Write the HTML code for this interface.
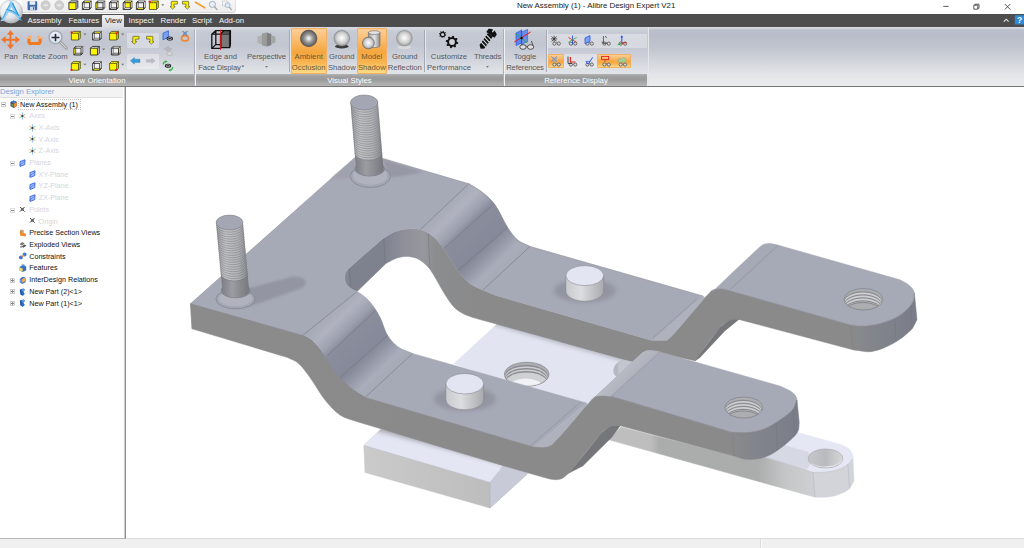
<!DOCTYPE html>
<html lang="en">
<head>
<meta charset="utf-8">
<title>New Assembly (1) - Alibre Design Expert V21</title>
<style>
html,body{margin:0;padding:0;width:1024px;height:548px;overflow:hidden;background:#fff;font-family:"Liberation Sans",sans-serif;}
*{box-sizing:border-box;}
#titlebar{position:absolute;left:0;top:0;width:1024px;height:14px;background:#fff;}
#qat{position:absolute;left:22px;top:0;width:214px;height:13px;background:linear-gradient(#f6f6f6,#ededed);border-bottom:1px solid #d5d5d5;border-right:1px solid #e2e2e2;border-radius:0 0 3px 0;}
#title{position:absolute;left:517px;top:0.4px;height:12px;line-height:12px;font-size:7.9px;color:#222;white-space:nowrap;}
#menubar{position:absolute;left:0;top:14px;width:1024px;height:12.5px;background:#4d4d4d;}
.tab{position:absolute;top:0.4px;height:12.5px;line-height:13px;font-size:7.8px;color:#f4f4f4;white-space:nowrap;}
#tabview{position:absolute;left:102px;top:0.5px;width:22px;height:12.5px;background:linear-gradient(#f0f0f2,#d9dbe1);border-radius:1px 1px 0 0;}
#ribbon{position:absolute;left:0;top:26.5px;width:1024px;height:60px;background:linear-gradient(#d9dce3 0%,#c6cad4 8%,#c2c6d1 30%,#cdd0d9 50%,#dfe2e6 75%,#e9ebec 100%);border-bottom:1px solid #757575;}
.grp{position:absolute;top:0;height:59px;}
.grplabel{position:absolute;left:0;right:0;top:47.5px;height:11.5px;background:linear-gradient(#b2b2b2 0%,#9f9f9f 22%,#9a9a9a 45%,#acacac 80%,#b5b5b5 100%);color:#fff;font-size:7.8px;line-height:13.5px;text-align:center;white-space:nowrap;overflow:hidden;}
.sep{position:absolute;top:2px;width:1px;height:57px;background:#adb0b8;box-shadow:1px 0 0 #f0f2f4;}
.sep2{position:absolute;top:3px;width:1px;height:42px;background:#a5a8b0;box-shadow:1px 0 0 #e6e8ec;}
.lbl{position:absolute;font-size:7.7px;line-height:11px;color:#585858;text-align:center;white-space:nowrap;transform:translateX(-50%);}
.on{position:absolute;background:linear-gradient(#fbcf9a 0%,#f9b866 30%,#f5a63f 52%,#f8b34f 75%,#fbdc8a 100%);border:1px solid #f3b060;border-radius:1px;}
.box{position:absolute;background:rgba(255,255,255,0.33);border-radius:1px;}
#explorer{z-index:2;position:absolute;left:0;top:87px;width:126px;height:451.5px;background:#fff;border-right:1.5px solid #8f8f8f;border-bottom:1px solid #b8b8b8;box-shadow:inset -1px 0 0 #cdcdcd;}
#exphead{position:absolute;left:0;top:0;width:123px;height:11px;background:#f3f3f3;border-bottom:1px solid #e0e0e0;color:#7da7d8;font-size:7.65px;line-height:10px;white-space:nowrap;}
.tr{position:absolute;margin-top:-0.1px;font-size:7.2px;line-height:10px;height:10px;white-space:nowrap;color:#111;}
.dim{color:#d3d6de;}
.pm{position:absolute;width:5px;height:5px;border:1px solid #b5b5b5;background:#fff;}
.pm i{position:absolute;left:0;top:1px;width:3px;height:1px;background:#888;}
#status{position:absolute;left:0;top:538px;width:1024px;height:10px;background:#f0f0f0;border-top:1px solid #dedede;}
#status i{position:absolute;left:759.5px;top:0;width:1px;height:10px;background:#fafafa;border-left:1px solid #dcdcdc;box-sizing:content-box;}
svg.ov{position:absolute;left:0;top:0;pointer-events:none;}
</style>
</head>
<body>
<div id="titlebar">
  <div id="qat"></div>
  <div id="title">New Assembly (1) - Alibre Design Expert V21</div>
</div>
<div id="menubar">
  <div id="tabview"></div>
  <div class="tab" style="left:27.5px">Assembly</div>
  <div class="tab" style="left:68.5px">Features</div>
  <div class="tab" style="left:105px;color:#222">View</div>
  <div class="tab" style="left:128.5px">Inspect</div>
  <div class="tab" style="left:160.5px">Render</div>
  <div class="tab" style="left:192px">Script</div>
  <div class="tab" style="left:219px">Add-on</div>
</div>
<div id="ribbon">
  <div class="grp" style="left:0;width:194px"><div class="grplabel">View Orientation</div></div>
  <div class="sep" style="left:194px"></div>
  <div class="grp" style="left:196px;width:307px"><div class="grplabel">Visual Styles</div></div>
  <div class="sep" style="left:503px"></div>
  <div class="grp" style="left:505px;width:142px"><div class="grplabel">Reference Display</div></div>
  <div style="position:absolute;left:648px;top:0;width:376px;height:59px;background:linear-gradient(#dde0e6 0%,#bcc0cb 5%,#b9bdc9 14%,#c1c5cf 35%,#d2d5db 58%,#e2e4e7 80%,#eaecec 100%);border-left:1px solid #e4e6ea"></div>
  <div class="sep2" style="left:289px"></div>
  <div class="sep2" style="left:424px"></div>
  <div class="sep2" style="left:546px"></div>
  <div class="box" style="left:126.8px;top:6.9px;width:32.2px;height:14.9px"></div>
  <div class="box" style="left:126.8px;top:27.5px;width:32.2px;height:14.5px"></div>
  <div class="box" style="left:548px;top:7px;width:98.5px;height:14px"></div>
  <div class="box" style="left:564px;top:27px;width:33px;height:14.5px"></div>
  <div class="on" style="left:291px;top:1.5px;width:35.5px;height:46px"></div>
  <div class="on" style="left:357px;top:1.5px;width:29.5px;height:46px"></div>
  <div class="on" style="left:548px;top:27px;width:16px;height:14.5px"></div>
  <div class="on" style="left:597px;top:27px;width:33.5px;height:14.5px"></div>
  <div class="lbl" style="left:11px;top:24.7px">Pan</div>
  <div class="lbl" style="left:34.2px;top:24.7px">Rotate</div>
  <div class="lbl" style="left:57.8px;top:24.7px">Zoom</div>
  <div class="lbl" style="left:220.5px;top:24.7px">Edge and<br><span style="letter-spacing:-0.17px;margin-left:-2px">Face Display</span></div>
  <div class="lbl" style="left:266.5px;top:24.7px;letter-spacing:-0.1px">Perspective</div>
  <div class="lbl" style="left:308.7px;top:24.7px;color:#6a5a30">Ambient<br>Occlusion</div>
  <div class="lbl" style="left:341.8px;top:24.7px">Ground<br>Shadow</div>
  <div class="lbl" style="left:371.8px;top:24.7px;color:#6a5a30">Model<br>Shadow</div>
  <div class="lbl" style="left:404.8px;top:24.7px">Ground<br>Reflection</div>
  <div class="lbl" style="left:449px;top:24.7px">Customize<br>Performance</div>
  <div class="lbl" style="left:487.5px;top:24.7px;letter-spacing:-0.15px">Threads</div>
  <div class="lbl" style="left:525px;top:24.7px">Toggle<br><span style="letter-spacing:-0.18px">References</span></div>
</div>
<svg class="ov" width="1024" height="90" viewBox="0 0 1024 90">
<defs>
<radialGradient id="gLogo" cx="40%" cy="30%" r="75%"><stop offset="0" stop-color="#ffffff"/><stop offset="0.6" stop-color="#e4e6ea"/><stop offset="1" stop-color="#a9adb5"/></radialGradient>
<radialGradient id="gSphD" cx="50%" cy="50%" r="55%"><stop offset="0" stop-color="#ffffff"/><stop offset="0.45" stop-color="#9a9a9a"/><stop offset="1" stop-color="#4a4a4a"/></radialGradient>
<radialGradient id="gSphL" cx="50%" cy="48%" r="55%"><stop offset="0" stop-color="#ffffff"/><stop offset="0.6" stop-color="#cfcfcf"/><stop offset="1" stop-color="#8f8f8f"/></radialGradient>
<linearGradient id="gCyl" x1="0" x2="1"><stop offset="0" stop-color="#9a9a9a"/><stop offset="0.5" stop-color="#e6e6e6"/><stop offset="1" stop-color="#8a8a8a"/></linearGradient>
<g id="cw" fill="none" stroke="#2e2e2e" stroke-width="0.9" stroke-linejoin="round">
 <path d="M2.2 0.4H9.3V7.2H2.2Z" stroke="#6a6a6a"/>
 <path d="M0.4 2.2H7.5V9H0.4Z"/>
 <path d="M0.4 2.2L2.2 0.4M7.5 2.2L9.3 0.4M7.5 9L9.3 7.2M0.4 9L2.2 7.2"/>
</g>
<path id="cbg" d="M0.4 2.2L2.2 0.4H9.3V7.2L7.5 9H0.4Z" fill="#f1f1f1"/>
<g id="cF"><use href="#cbg"/><path d="M0.4 2.2H7.5V9H0.4Z" fill="#fdf400"/><path d="M7.5 2.2L9.3 0.4V7.2L7.5 9Z" fill="#d8d8d8"/><path d="M0.4 2.2H7.5V9H0.4ZM0.4 2.2L2.2 0.4H9.3V7.2L7.5 9M7.5 2.2L9.3 0.4" fill="none" stroke="#2e2e2e" stroke-width="0.9" stroke-linejoin="round"/></g>
<g id="cBk"><use href="#cbg"/><path d="M2.2 0.4H9.3V7.2H2.2Z" fill="#fdf400"/><use href="#cw"/></g>
<g id="cL"><use href="#cbg"/><path d="M0.4 2.2L2.2 0.4V7.2L0.4 9Z" fill="#fdf400"/><path d="M0.4 9L2.2 7.2H9.3L7.5 9Z" fill="#bdbdbd"/><use href="#cw"/></g>
<g id="cR"><use href="#cbg"/><path d="M7.5 2.2L9.3 0.4V7.2L7.5 9Z" fill="#fdf400"/><path d="M0.4 9L2.2 7.2H9.3L7.5 9Z" fill="#bdbdbd"/><use href="#cw"/></g>
<g id="cT"><use href="#cbg"/><path d="M0.4 2.2L2.2 0.4H9.3L7.5 2.2Z" fill="#fdf400"/><path d="M7.5 2.2L9.3 0.4V7.2L7.5 9Z" fill="#d0d0d0"/><use href="#cw"/></g>
<g id="cU"><use href="#cbg"/><path d="M0.4 9L2.2 7.2H9.3L7.5 9Z" fill="#fdf400"/><use href="#cw"/></g>
<g id="cI"><path d="M0.4 2.2L2.2 0.4H9.3V7.2L7.5 9H0.4Z" fill="#fdf400"/><path d="M7.5 2.2L9.3 0.4V7.2L7.5 9Z" fill="#e0d800"/><path d="M0.4 2.2H7.5V9H0.4ZM7.5 2.2L9.3 0.4M0.4 2.2L2.2 0.4H9.3V7.2L7.5 9" fill="none" stroke="#4a4a20" stroke-width="0.8" stroke-linejoin="round"/></g>
<path id="dd" d="M0 0H3L1.5 1.8Z" fill="#777"/>
<g id="gl" fill="none" stroke="#6a6a6a" stroke-width="1"><circle cx="1.8" cy="2" r="1.6" fill="#d8d8d8"/><circle cx="6.2" cy="2" r="1.6" fill="#d8d8d8"/><path d="M3.4 1.6Q4 1 4.6 1.6"/></g>
</defs>
<circle cx="11" cy="11.5" r="11.5" fill="url(#gLogo)" stroke="#b5b8bf" stroke-width="0.6"/>
<path d="M11 0.4L13.8 3.4L4 20.6L0.4 21.6Z" fill="#9ed2f5"/><path d="M11 0.4L21.8 20.8L18.4 19.4L9.2 3.2Z" fill="#8ecbf2"/><path d="M12.4 3L20.6 19.8" stroke="#2496d6" stroke-width="1.3" fill="none"/><path d="M9.8 4.4L2.2 19.6" stroke="#3aa2dc" stroke-width="1" fill="none"/><path d="M5.6 10.2Q12.6 10.4 19.6 17.6" stroke="#8ecbf2" stroke-width="2.6" fill="none"/><path d="M6.4 9.4Q13 9.8 19.4 16" stroke="#2a9ad8" stroke-width="1" fill="none"/>
<g><rect x="27.6" y="1.2" width="9.6" height="9" rx="0.8" fill="#3f69a8"/><rect x="29.6" y="1.2" width="5.6" height="3.6" fill="#e9eef7"/><rect x="30" y="6.6" width="5" height="3.6" fill="#c9d6ea"/><rect x="33" y="7.2" width="1.3" height="2.4" fill="#3f69a8"/></g>
<circle cx="45.6" cy="5.2" r="4.5" fill="#cecece" stroke="#bcbcbc" stroke-width="0.6"/><path d="M43.2 5.2L45.6 3.4V4.6H48V5.9H45.6V7Z" fill="#e9e9e9"/>
<circle cx="59.3" cy="5.2" r="4.5" fill="#cecece" stroke="#bcbcbc" stroke-width="0.6"/><path d="M61.7 5.2L59.3 3.4V4.6H56.9V5.9H59.3V7Z" fill="#e9e9e9"/>
<use href="#cF" x="68.5" y="0.5"/>
<use href="#cT" x="82" y="0.5"/>
<use href="#cL" x="95.5" y="0.5"/>
<use href="#cR" x="109" y="0.5"/>
<use href="#cBk" x="122.8" y="0.5"/>
<use href="#cU" x="136" y="0.5"/>
<use href="#cI" x="149" y="0.5"/>
<rect x="148.6" y="0.6" width="2" height="2" fill="#f01818"/>
<use href="#dd" x="161.3" y="4.2"/>
<path transform="translate(170 0.8) scale(1)" d="M1.8 0.5H7.4V3.3H4V5.8H5.2L2.6 8.3L0 5.8H1.2V1.1Q1.2 0.5 1.8 0.5Z" fill="#f7ee00" stroke="#5a5a30" stroke-width="0.7" stroke-linejoin="round"/>
<path transform="translate(182.5 0.8) scale(1)" d="M5.6 0.5H0V3.3H3.4V5.8H2.2L4.8 8.3L7.4 5.8H6.2V1.1Q6.2 0.5 5.6 0.5Z" fill="#f7ee00" stroke="#5a5a30" stroke-width="0.7" stroke-linejoin="round"/>
<path d="M195.5 2.2L204.8 7.8" stroke="#f0a030" stroke-width="1.6" stroke-linecap="round"/>
<circle cx="212.4" cy="4.4" r="3.1" fill="#e6edf6" stroke="#a9b4c2" stroke-width="1"/><path d="M214.6 6.8L217 9.6" stroke="#a9a9a9" stroke-width="1.4" stroke-linecap="round"/>
<rect x="222.5" y="1" width="5.5" height="5" fill="none" stroke="#9a9a9a" stroke-width="0.6" stroke-dasharray="1 0.7"/><circle cx="227.6" cy="5.2" r="2.5" fill="#dbe8f6" stroke="#9fb2c8" stroke-width="0.8"/><path d="M229.4 7.2L231.4 9.6" stroke="#a9a9a9" stroke-width="1.2" stroke-linecap="round"/>
<path d="M943.3 6.4H948.6" stroke="#333" stroke-width="0.8"/>
<path d="M973.8 5.2H977.8V9.2H973.8ZM975 5.2V4.2H979V8.2H977.8" fill="none" stroke="#333" stroke-width="0.8"/>
<path d="M1004.8 4L1010.3 9.5M1010.3 4L1004.8 9.5" stroke="#333" stroke-width="0.8"/>
<path d="M1003.8 21.6L1006.2 19.2L1008.6 21.6" fill="none" stroke="#e8e8e8" stroke-width="1.1"/>
<rect x="1014.8" y="15.3" width="9.2" height="9.2" rx="1" fill="#2f8ad8"/><text x="1019.6" y="23" font-family="Liberation Sans, sans-serif" font-weight="bold" font-size="8.5" fill="#fff" text-anchor="middle">?</text>
<path fill="#f0752a" d="M10.5 30.2L14.1 34.8H11.5V38.7H15.4V36.1L20 39.7L15.4 43.3V40.7H11.5V44.6H14.1L10.5 49.2L6.9 44.6H9.5V40.7H5.6V43.3L1 39.7L5.6 36.1V38.7H9.5V34.8H6.9Z"/>
<path d="M28.9 38.6V41.2Q28.9 43.5 31.4 43.5H37.6Q40.1 43.5 40.1 41.2V38.6" fill="none" stroke="#f07a22" stroke-width="3.2"/><path d="M25 39L31.3 35V39Z" fill="#f9ab62"/><path d="M44 39L37.7 35V39Z" fill="#f9ab62"/>
<circle cx="55.5" cy="37.3" r="6.4" fill="#dce9f8" stroke="#a2a6ad" stroke-width="1.3"/><path d="M52 34.6A4.6 4.6 0 0 1 57.6 33.4" stroke="#ffffff" stroke-width="1.2" fill="none" opacity="0.8"/><path d="M51.6 37.5H59.4M55.5 33.8V41.2" stroke="#2a2a2a" stroke-width="1.6"/><path d="M60.6 42.4L66.4 48.2" stroke="#a0a0a0" stroke-width="3" stroke-linecap="round"/><path d="M60.8 42.6L66.2 48" stroke="#e6e6e6" stroke-width="1" stroke-linecap="round"/>
<use href="#cI" x="71" y="31"/>
<use href="#cT" x="92.2" y="31"/>
<use href="#cI" x="109.2" y="31"/>
<use href="#cL" x="73.5" y="46"/>
<use href="#cF" x="90" y="46"/>
<use href="#cR" x="111" y="46"/>
<use href="#cI" x="71" y="61.2"/>
<use href="#cU" x="92.2" y="61.2"/>
<use href="#cI" x="109.2" y="61.2"/>
<rect x="70.6" y="31.4" width="1.9" height="1.9" fill="#f01818"/><rect x="115.6" y="32.3" width="1.9" height="1.9" fill="#f01818"/>
<rect x="70.6" y="69" width="1.9" height="1.9" fill="#f01818"/><rect x="115.2" y="69" width="1.9" height="1.9" fill="#f01818"/>
<use href="#dd" x="83.4" y="33.6"/>
<use href="#dd" x="121.2" y="33.6"/>
<use href="#dd" x="102.2" y="48.6"/>
<use href="#dd" x="83.4" y="63.8"/>
<use href="#dd" x="121.2" y="63.8"/>
<path transform="translate(131.6 35.8) scale(1)" d="M1.8 0.5H7.4V3.3H4V5.8H5.2L2.6 8.3L0 5.8H1.2V1.1Q1.2 0.5 1.8 0.5Z" fill="#f7ee00" stroke="#5a5a30" stroke-width="0.7" stroke-linejoin="round"/>
<path transform="translate(146.6 35.8) scale(1)" d="M5.6 0.5H0V3.3H3.4V5.8H2.2L4.8 8.3L7.4 5.8H6.2V1.1Q6.2 0.5 5.6 0.5Z" fill="#f7ee00" stroke="#5a5a30" stroke-width="0.7" stroke-linejoin="round"/>
<path d="M130.4 60.8L134.4 57.4V59.2H140V62.4H134.4V64.2Z" fill="#3a9ad9" stroke="#2b7fb8" stroke-width="0.4"/>
<path d="M155.4 60.8L151.4 57.4V59.2H146V62.4H151.4V64.2Z" fill="#b9bcc2"/>
<path d="M163 33.2L168.4 30.8V37.2L163 39.8Z" fill="#7aa2f0" stroke="#2f5fd8" stroke-width="0.8"/><ellipse cx="169.8" cy="38.6" rx="3.2" ry="2" fill="#1c1c1c"/><ellipse cx="169.8" cy="38.6" rx="1.9" ry="1" fill="none" stroke="#e8e8e8" stroke-width="0.6"/>
<path d="M163.4 49L168 46L172.6 49L168 52Z" fill="#b5b7bc"/><ellipse cx="169.6" cy="53.6" rx="2.8" ry="1.8" fill="#d9d9d9" stroke="#a9a9a9" stroke-width="0.7"/>
<path d="M163.2 64.4Q163.6 61.8 166 61.4" fill="none" stroke="#35b545" stroke-width="1.3"/><path d="M165.4 60.2L167.8 61.4L165.6 62.8Z" fill="#35b545"/><ellipse cx="168" cy="65.8" rx="3.2" ry="2" fill="#1c1c1c"/><ellipse cx="168" cy="65.8" rx="1.9" ry="1" fill="none" stroke="#e8e8e8" stroke-width="0.6"/><path d="M172.8 67.2Q172.4 69.8 170 70.2" fill="none" stroke="#35b545" stroke-width="1.3"/><path d="M170.6 71.4L168.2 70.2L170.4 68.8Z" fill="#35b545"/>
<ellipse cx="185" cy="38.4" rx="3.6" ry="2.5" fill="none" stroke="#f08a3a" stroke-width="1.7"/><path d="M182.6 31L187.4 35.8M187.4 31L182.6 35.8" stroke="#444" stroke-width="0.7"/><rect x="183.3" y="31.8" width="3.4" height="3.2" fill="#6a8fd0" opacity="0.85"/>
<g stroke="#111" stroke-width="1.3" fill="none" stroke-linejoin="round"><path d="M220.6 33.8H229.6V47.6H220.6Z" fill="#777"/><path d="M220.6 33.8L224 30.6H230.4L229.6 33.8" fill="#555"/><path d="M229.6 33.8L230.4 30.6V44.4L229.6 47.6" fill="#444"/><path d="M211.8 34.2H220.6V48.4H211.8ZM211.8 34.2L215.8 30.6H224M215.8 30.6V44.6L211.8 48.4M215.8 44.6H220.6"/></g><path d="M220.6 29.6V50" stroke="#e81818" stroke-width="0.9"/>
<path d="M257.4 36.4L262 35V44.4L257.4 43Z" fill="#b0b0b0"/><path d="M262 33.6L266.6 32.6V46.4L262 45.4Z" fill="#9a9a9a"/><path d="M266.6 32.6L271.4 34V45L266.6 46.4Z" fill="#7f7f7f"/><path d="M271.4 35.4L275.4 36.6V42.6L271.4 43.8Z" fill="#a5a5a5"/>
<use href="#dd" x="265" y="66"/><use href="#dd" x="241.4" y="65.6" transform="translate(0 0)"/>
<circle cx="308.7" cy="38.4" r="8.3" fill="url(#gSphD)" stroke="#444" stroke-width="0.5"/>
<ellipse cx="341.8" cy="46.4" rx="6.8" ry="2" fill="#3a3a3a"/><circle cx="341.8" cy="38.2" r="7.9" fill="url(#gSphL)" stroke="#777" stroke-width="0.5"/>
<path d="M368.4 32.6V45.6A5.8 2 0 0 0 380 45.6V32.6Z" fill="url(#gCyl)" stroke="#555" stroke-width="0.5"/><ellipse cx="374.2" cy="32.6" rx="5.8" ry="1.9" fill="#e2e2e2" stroke="#555" stroke-width="0.5"/><circle cx="368.4" cy="43" r="5.9" fill="url(#gSphL)" stroke="#555" stroke-width="0.6"/>
<ellipse cx="404.4" cy="47.2" rx="7" ry="1.8" fill="#d9dadd"/><circle cx="404.4" cy="38.2" r="7.9" fill="url(#gSphL)" stroke="#888" stroke-width="0.5"/>
<path d="M446.18 34.75L446.04 35.45L444.89 35.63L444.61 36.05L444.88 37.18L444.30 37.57L443.35 36.89L442.85 36.99L442.25 37.98L441.55 37.84L441.37 36.69L440.95 36.41L439.82 36.68L439.43 36.10L440.11 35.15L440.01 34.65L439.02 34.05L439.16 33.35L440.31 33.17L440.59 32.75L440.32 31.62L440.90 31.23L441.85 31.91L442.35 31.81L442.95 30.82L443.65 30.96L443.83 32.11L444.25 32.39L445.38 32.12L445.77 32.70L445.09 33.65L445.19 34.15Z" fill="#111"/><circle cx="442.6" cy="34.4" r="1.5" fill="#cfd2da"/>
<path d="M458.27 42.62L458.03 43.83L456.15 44.22L455.63 44.98L456.00 46.87L454.97 47.56L453.36 46.50L452.46 46.68L451.38 48.27L450.17 48.03L449.78 46.15L449.02 45.63L447.13 46.00L446.44 44.97L447.50 43.36L447.32 42.46L445.73 41.38L445.97 40.17L447.85 39.78L448.37 39.02L448.00 37.13L449.03 36.44L450.64 37.50L451.54 37.32L452.62 35.73L453.83 35.97L454.22 37.85L454.98 38.37L456.87 38.00L457.56 39.03L456.50 40.64L456.68 41.54Z" fill="#111"/><circle cx="452" cy="42" r="2.9" fill="#cfd2da"/>
<g transform="translate(487.2 39.4) rotate(35)"><path d="M-5 -9.6Q0 -13.4 5 -9.6L5 -5.6H-5Z" fill="#111"/><rect x="-0.7" y="-12.4" width="1.4" height="3.4" fill="#cfd2da"/><path d="M-3 -5.6H3V9L0 11.4L-3 9Z" fill="#111"/><path d="M-3.6 -3.4L3.6 -1.8M-3.6 -0.4L3.6 1.2M-3.6 2.6L3.6 4.2M-3.6 5.6L3.6 7.2" stroke="#d4d7dd" stroke-width="1.1"/></g>
<use href="#dd" x="485.9" y="66"/>
<path d="M516 33L521.4 30.4V43L516 45.6Z" fill="#5a86f0" stroke="#2a55e0" stroke-width="0.7"/><path d="M521.6 32L527.6 29.4V41.6L521.6 44.4Z" fill="#5a86f0" stroke="#2a55e0" stroke-width="0.7" opacity="0.85"/><path d="M514.4 42L530.6 32" stroke="#e81818" stroke-width="1"/><path d="M515.4 33.6L527.4 43" stroke="#2fa83a" stroke-width="0.9"/><path d="M521.6 29.6V46" stroke="#2a55e0" stroke-width="0.9"/><circle cx="521.6" cy="38" r="1.2" fill="#111"/><g fill="#e0e0e0" stroke="#444" stroke-width="0.9"><ellipse cx="523" cy="47" rx="3.2" ry="2.3"/><ellipse cx="530.6" cy="47" rx="3.2" ry="2.3"/><path d="M526.2 46.4Q526.8 45.6 527.4 46.4M533 45.4L531.4 41" fill="none"/></g>
<use href="#gl" x="552.6" y="41.6"/>
<use href="#gl" x="552.6" y="62.6"/>
<use href="#gl" x="569.1" y="41.6"/>
<use href="#gl" x="569.1" y="62.6"/>
<use href="#gl" x="585.6" y="41.6"/>
<use href="#gl" x="585.6" y="62.6"/>
<use href="#gl" x="602.6" y="41.6"/>
<use href="#gl" x="602.6" y="62.6"/>
<use href="#gl" x="618.9" y="41.6"/>
<use href="#gl" x="618.9" y="62.6"/>
<path d="M551.6 36.4L556.6 41.4M556.6 36.4L551.6 41.4M554.1 35.8V42M551 38.9H557.2" stroke="#333" stroke-width="0.8"/>
<path d="M572.5 35.6V44.6" stroke="#2a55e0" stroke-width="0.9"/><path d="M568.4 37.4L576.6 42.4" stroke="#e81818" stroke-width="0.8"/><path d="M568.4 42.4L576.6 37.4" stroke="#2fa83a" stroke-width="0.8"/>
<path d="M585 38L590 35.6V41.4L585 43.8Z" fill="#7aa2f0" stroke="#2a55e0" stroke-width="0.8"/>
<path d="M603.4 36V43.4H607.6M601.6 42L605 43.4M605 36.4L607 37.6" fill="none" stroke="#555" stroke-width="0.9"/>
<path d="M621.8 36V43.2" stroke="#2a55e0" stroke-width="1"/><path d="M620.4 37.6L621.8 35.2L623.2 37.6Z" fill="#2a55e0"/><path d="M621.8 43.2L626.4 42.6" stroke="#e81818" stroke-width="1"/><path d="M621.8 43.2L617.8 44.6" stroke="#2fa83a" stroke-width="1"/>
<path d="M551.4 56.6L556.6 61.6M556.6 56.6L551.4 61.6" stroke="#5a7ab8" stroke-width="0.9"/><rect x="552.4" y="57.4" width="4.6" height="4.4" fill="#9aa6c0" opacity="0.7"/>
<path d="M568 56.6V63.4H572" fill="none" stroke="#333" stroke-width="0.9"/><path d="M570.4 57V62H575.4" fill="none" stroke="#e02020" stroke-width="1.2"/>
<path d="M586 62.4L588.4 64L592.6 57.4" fill="none" stroke="#2a55e0" stroke-width="1"/><path d="M585.6 61.4H590" stroke="#2a55e0" stroke-width="0.8"/>
<rect x="601.6" y="56.4" width="7" height="3.2" fill="none" stroke="#e02020" stroke-width="0.9"/><path d="M605 59.6V62" stroke="#e02020" stroke-width="0.8"/>
<path d="M618 62L619 58.4L621.4 59.4L623 57.4L625.8 58.8L626 62Z" fill="#a8d0a0" stroke="#7aa878" stroke-width="0.5"/>
</svg>
<div id="explorer">
<div id="exphead">Design Explorer</div>
<div style="position:absolute;left:18px;top:11.6px;width:62.6px;height:11.8px;border:1px dotted #c6c6c6"></div>
<div class="pm" style="left:1.2px;top:15.15px;border-color:#cdcdcd"><i></i></div>
<svg style="position:absolute;left:10px;top:13.25px" width="8" height="8.4" viewBox="0 0 8 8.4"><path d="M0.5 2L3.6 0.6L6.8 2V6L3.6 8L0.5 6Z" fill="#3a3f55"/><path d="M3.6 3.4L6.8 2V6L3.6 8Z" fill="#f08a30"/><path d="M0.5 2L3.6 3.4L6.8 2L3.6 0.6Z" fill="#3f7fd0"/><path d="M1.4 3.4L3 4.2V6.4L1.4 5.6Z" fill="#6aa84f"/></svg>
<div class="tr" style="left:20px;top:12.65px">New Assembly (1)</div>
<div class="pm" style="left:10.2px;top:26.86px;border-color:#dcdcdc"><i></i></div>
<svg style="position:absolute;left:19.2px;top:24.96px" width="8" height="8.4" viewBox="0 0 8 8.4" opacity="0.9"><path d="M3.4 0.4V7.6" stroke="#5a9ae8" stroke-width="0.8"/><path d="M0.4 2.2L6.4 5.8" stroke="#f0963a" stroke-width="0.9"/><path d="M0.4 5.8L6.4 2.2" stroke="#58a858" stroke-width="0.8"/><circle cx="3.4" cy="4" r="0.9" fill="#222"/></svg>
<div class="tr dim" style="left:29.2px;top:24.36px">Axes</div>
<svg style="position:absolute;left:28.8px;top:36.66px" width="8" height="8.4" viewBox="0 0 8 8.4" opacity="0.9"><path d="M3.4 0.4V7.6" stroke="#5a9ae8" stroke-width="0.8"/><path d="M0.4 2.2L6.4 5.8" stroke="#f0963a" stroke-width="0.9"/><path d="M0.4 5.8L6.4 2.2" stroke="#58a858" stroke-width="0.8"/><circle cx="3.4" cy="4" r="0.9" fill="#222"/></svg>
<div class="tr dim" style="left:38.6px;top:36.06px">X-Axis</div>
<svg style="position:absolute;left:28.8px;top:48.37px" width="8" height="8.4" viewBox="0 0 8 8.4" opacity="0.9"><path d="M3.4 0.4V7.6" stroke="#5a9ae8" stroke-width="0.8"/><path d="M0.4 2.2L6.4 5.8" stroke="#f0963a" stroke-width="0.9"/><path d="M0.4 5.8L6.4 2.2" stroke="#58a858" stroke-width="0.8"/><circle cx="3.4" cy="4" r="0.9" fill="#222"/></svg>
<div class="tr dim" style="left:38.6px;top:47.77px">Y-Axis</div>
<svg style="position:absolute;left:28.8px;top:60.07px" width="8" height="8.4" viewBox="0 0 8 8.4" opacity="0.9"><path d="M3.4 0.4V7.6" stroke="#5a9ae8" stroke-width="0.8"/><path d="M0.4 2.2L6.4 5.8" stroke="#f0963a" stroke-width="0.9"/><path d="M0.4 5.8L6.4 2.2" stroke="#58a858" stroke-width="0.8"/><circle cx="3.4" cy="4" r="0.9" fill="#222"/></svg>
<div class="tr dim" style="left:38.6px;top:59.47px">Z-Axis</div>
<div class="pm" style="left:10.2px;top:73.68px;border-color:#dcdcdc"><i></i></div>
<svg style="position:absolute;left:19.2px;top:71.78px" width="8" height="8.4" viewBox="0 0 8 8.4" opacity="0.9"><path d="M1 2.6L5.8 0.8V5.6L1 7.4Z" fill="#9ab6f4" stroke="#2f5fe0" stroke-width="1"/><path d="M0.2 6.4L6.6 1.6" stroke="#2f5fe0" stroke-width="0.7"/></svg>
<div class="tr dim" style="left:29.2px;top:71.18px">Planes</div>
<svg style="position:absolute;left:28.8px;top:83.49px" width="8" height="8.4" viewBox="0 0 8 8.4" opacity="0.9"><path d="M1 2.6L5.8 0.8V5.6L1 7.4Z" fill="#9ab6f4" stroke="#2f5fe0" stroke-width="1"/><path d="M0.2 6.4L6.6 1.6" stroke="#2f5fe0" stroke-width="0.7"/></svg>
<div class="tr dim" style="left:38.6px;top:82.89px">XY-Plane</div>
<svg style="position:absolute;left:28.8px;top:95.19px" width="8" height="8.4" viewBox="0 0 8 8.4" opacity="0.9"><path d="M1 2.6L5.8 0.8V5.6L1 7.4Z" fill="#9ab6f4" stroke="#2f5fe0" stroke-width="1"/><path d="M0.2 6.4L6.6 1.6" stroke="#2f5fe0" stroke-width="0.7"/></svg>
<div class="tr dim" style="left:38.6px;top:94.59px">YZ-Plane</div>
<svg style="position:absolute;left:28.8px;top:106.90px" width="8" height="8.4" viewBox="0 0 8 8.4" opacity="0.9"><path d="M1 2.6L5.8 0.8V5.6L1 7.4Z" fill="#9ab6f4" stroke="#2f5fe0" stroke-width="1"/><path d="M0.2 6.4L6.6 1.6" stroke="#2f5fe0" stroke-width="0.7"/></svg>
<div class="tr dim" style="left:38.6px;top:106.30px">ZX-Plane</div>
<div class="pm" style="left:10.2px;top:120.50px;border-color:#dcdcdc"><i></i></div>
<svg style="position:absolute;left:19.2px;top:118.60px" width="8" height="8.4" viewBox="0 0 8 8.4" opacity="0.9"><path d="M1 1L5.6 5.6M5.6 1L1 5.6" stroke="#333" stroke-width="1"/><rect x="1.9" y="1.9" width="2.8" height="2.8" fill="#555"/></svg>
<div class="tr dim" style="left:29.2px;top:118.00px">Points</div>
<svg style="position:absolute;left:28.8px;top:130.31px" width="8" height="8.4" viewBox="0 0 8 8.4" opacity="0.9"><path d="M1 1L5.6 5.6M5.6 1L1 5.6" stroke="#333" stroke-width="1"/><rect x="1.9" y="1.9" width="2.8" height="2.8" fill="#555"/></svg>
<div class="tr dim" style="left:38.6px;top:129.71px">Origin</div>
<svg style="position:absolute;left:19.2px;top:142.02px" width="8" height="8.4" viewBox="0 0 8 8.4"><path d="M1 1.6L3.4 0.6V3.6L6.2 4.6V7.6L1 6.4Z" fill="#f08a2a"/><path d="M3.4 0.6L4.6 1.4V3.8L3.4 3.6Z" fill="#8a8a8a"/><path d="M6.2 4.6V7.6L6.8 7V4.6Z" fill="#c06a18"/></svg>
<div class="tr" style="left:29.2px;top:141.42px">Precise Section Views</div>
<svg style="position:absolute;left:19.2px;top:153.72px" width="8" height="8.4" viewBox="0 0 8 8.4"><path d="M0.6 3.2L3.2 1L5.6 2.4L3 4.4Z" fill="#777"/><path d="M2.6 5.6L5.4 3.4L7.4 4.6L4.6 6.8Z" fill="#555"/><path d="M0.8 5.6L2.4 4.6L3.4 6L1.8 7.2Z" fill="#999"/></svg>
<div class="tr" style="left:29.2px;top:153.12px">Exploded Views</div>
<svg style="position:absolute;left:19.2px;top:165.43px" width="8" height="8.4" viewBox="0 0 8 8.4"><circle cx="1.9" cy="5.4" r="1.9" fill="#3a6ad8"/><circle cx="5.6" cy="2.6" r="2" fill="#3a7ae0"/><path d="M2 4.6L4.8 2.4L5.6 3.6L2.8 5.8Z" fill="#f0882a"/></svg>
<div class="tr" style="left:29.2px;top:164.83px">Constraints</div>
<svg style="position:absolute;left:19.2px;top:177.13px" width="8" height="8.4" viewBox="0 0 8 8.4"><path d="M0.6 3L3.8 1L7.2 2.4V6.4L3.6 8L0.6 6.6Z" fill="#3a6fc8"/><path d="M0.8 3.4L3.6 4.4V7.8L0.8 6.6Z" fill="#f4e04a"/><path d="M2 0.8L4.6 0.2L6.4 1.4L3.8 2.2Z" fill="#5a8fe0"/></svg>
<div class="tr" style="left:29.2px;top:176.53px">Features</div>
<div class="pm" style="left:10.2px;top:190.74px;border-color:#cdcdcd"><i></i><i style="left:1px;top:0;width:1px;height:3px"></i></div>
<svg style="position:absolute;left:19.2px;top:188.84px" width="8" height="8.4" viewBox="0 0 8 8.4"><path d="M0.8 3L3.6 0.8L6.6 1.8V6L3.6 8L0.8 6.6Z" fill="#3a6fc8"/><path d="M2.6 3.6L5.6 1.6L6.2 4.8L3.6 7Z" fill="#f4b04a"/><path d="M1 3.4L2.6 4V7L1 6.4Z" fill="#6a9ae8"/></svg>
<div class="tr" style="left:29.2px;top:188.24px">InterDesign Relations</div>
<div class="pm" style="left:10.2px;top:202.45px;border-color:#cdcdcd"><i></i><i style="left:1px;top:0;width:1px;height:3px"></i></div>
<svg style="position:absolute;left:19.2px;top:200.55px" width="8" height="8.4" viewBox="0 0 8 8.4"><path d="M0.8 1.4L4.6 0.6L6 1.8L4.4 3.4L5.8 6L3.8 8L1.6 6.4Z" fill="#2f6fc0"/><path d="M0.8 1.4L2.4 2.4L2.8 7.2L1.6 6.4Z" fill="#1d4f98"/><path d="M2.4 2.4L4.6 0.6L6 1.8L4.4 3.4Z" fill="#5a9ae0"/></svg>
<div class="tr" style="left:29.2px;top:199.95px">New Part (2)&lt;1&gt;</div>
<div class="pm" style="left:10.2px;top:214.15px;border-color:#cdcdcd"><i></i><i style="left:1px;top:0;width:1px;height:3px"></i></div>
<svg style="position:absolute;left:19.2px;top:212.25px" width="8" height="8.4" viewBox="0 0 8 8.4"><path d="M0.8 1.4L4.6 0.6L6 1.8L4.4 3.4L5.8 6L3.8 8L1.6 6.4Z" fill="#2f6fc0"/><path d="M0.8 1.4L2.4 2.4L2.8 7.2L1.6 6.4Z" fill="#1d4f98"/><path d="M2.4 2.4L4.6 0.6L6 1.8L4.4 3.4Z" fill="#5a9ae0"/></svg>
<div class="tr" style="left:29.2px;top:211.65px">New Part (1)&lt;1&gt;</div>
</div>
<div id="status"><i></i></div>
<svg class="ov" width="1024" height="548" viewBox="0 0 1024 548">
<defs>
<clipPath id="vp"><rect x="126" y="87" width="898" height="451"/></clipPath>
<linearGradient id="gThread" x1="0" x2="1"><stop offset="0" stop-color="#9c9da1"/><stop offset="0.3" stop-color="#c3c4c7"/><stop offset="0.7" stop-color="#b3b4b7"/><stop offset="1" stop-color="#8c8d92"/></linearGradient>
<linearGradient id="gShank" x1="0" x2="1"><stop offset="0" stop-color="#7c7d82"/><stop offset="0.4" stop-color="#9c9da2"/><stop offset="1" stop-color="#77787d"/></linearGradient>
<linearGradient id="gPin" x1="0" x2="1"><stop offset="0" stop-color="#c9cacd"/><stop offset="0.4" stop-color="#dcdde0"/><stop offset="1" stop-color="#a9aaae"/></linearGradient>
<linearGradient id="gBendF" gradientUnits="userSpaceOnUse" x1="444.4" y1="206.6" x2="506" y2="269"><stop offset="0" stop-color="#a6a9b6"/><stop offset="0.14" stop-color="#b0b3bf"/><stop offset="0.28" stop-color="#9c9fad"/><stop offset="0.35" stop-color="#8a8d9c"/><stop offset="0.65" stop-color="#868999"/><stop offset="0.72" stop-color="#9093a2"/><stop offset="0.88" stop-color="#a9acb9"/><stop offset="1" stop-color="#a6a9b6"/></linearGradient>
<linearGradient id="gBendN" gradientUnits="userSpaceOnUse" x1="328.75" y1="313.25" x2="388.75" y2="375.6"><stop offset="0" stop-color="#a6a9b6"/><stop offset="0.14" stop-color="#b0b3bf"/><stop offset="0.28" stop-color="#9c9fad"/><stop offset="0.35" stop-color="#8a8d9c"/><stop offset="0.65" stop-color="#868999"/><stop offset="0.72" stop-color="#9093a2"/><stop offset="0.88" stop-color="#a9acb9"/><stop offset="1" stop-color="#a6a9b6"/></linearGradient>
<linearGradient id="gSlot" gradientUnits="userSpaceOnUse" x1="345" y1="0" x2="470" y2="0"><stop offset="0" stop-color="#878a97"/><stop offset="0.04" stop-color="#7e818e"/><stop offset="0.3" stop-color="#7e818e"/><stop offset="0.45" stop-color="#8c8e99"/><stop offset="0.62" stop-color="#97989d"/><stop offset="0.72" stop-color="#8c8d8f"/><stop offset="1" stop-color="#8a8a8b"/></linearGradient>
<linearGradient id="gFront" gradientUnits="userSpaceOnUse" x1="190" y1="0" x2="420" y2="0"><stop offset="0" stop-color="#8b8b8c"/><stop offset="1" stop-color="#8a8a8b"/></linearGradient>
<linearGradient id="gBar" gradientUnits="userSpaceOnUse" x1="610" y1="0" x2="815" y2="0"><stop offset="0" stop-color="#bebfbe"/><stop offset="0.2" stop-color="#bcbdbc"/><stop offset="0.24" stop-color="#abadac"/><stop offset="0.72" stop-color="#abadac"/><stop offset="0.85" stop-color="#c4c5c6"/><stop offset="1" stop-color="#cfd0d3"/></linearGradient>
<linearGradient id="gBand" gradientUnits="userSpaceOnUse" x1="615" y1="372" x2="632" y2="388"><stop offset="0" stop-color="#bbbdc6"/><stop offset="1" stop-color="#abaeb9"/></linearGradient>
<filter id="blur2" x="-20%" y="-40%" width="140%" height="180%"><feGaussianBlur stdDeviation="2"/></filter>
<filter id="blur1" x="-20%" y="-40%" width="140%" height="180%"><feGaussianBlur stdDeviation="1.2"/></filter>
<linearGradient id="gEndF" gradientUnits="userSpaceOnUse" x1="853" y1="0" x2="917" y2="0"><stop offset="0" stop-color="#8a8a8b"/><stop offset="0.3" stop-color="#83858c"/><stop offset="1" stop-color="#7a7d89"/></linearGradient>
<linearGradient id="gEndN" gradientUnits="userSpaceOnUse" x1="733" y1="0" x2="799" y2="0"><stop offset="0" stop-color="#8a8a8b"/><stop offset="0.3" stop-color="#83858c"/><stop offset="1" stop-color="#7a7d89"/></linearGradient>
<linearGradient id="gBlkF" gradientUnits="userSpaceOnUse" x1="365" y1="0" x2="490" y2="0"><stop offset="0" stop-color="#cacaca"/><stop offset="1" stop-color="#bdbdbd"/></linearGradient>
<linearGradient id="gBhole" x1="0" x2="1"><stop offset="0" stop-color="#c6c7cd"/><stop offset="0.5" stop-color="#b9babd"/><stop offset="1" stop-color="#d6d7d8"/></linearGradient>
</defs>
<g clip-path="url(#vp)">
<path d="M497.5 323.5L560.0 338.0L640.0 362.0L640.0 420.0L560.0 400.0L453.8 363.8Z" fill="#e2e4f1" stroke="#e2e4f1" stroke-width="0.5" stroke-linejoin="round" />
<path d="M560.0 338.0L631.0 357.7L645.0 356.0L625.0 380.0L560.0 372.0Z" fill="#e2e4f1" stroke="#e2e4f1" stroke-width="0.5" stroke-linejoin="round" />
<clipPath id="cLP"><path d="M497.5 323.5L560 338L640 362L640 420L560 400L453.75 363.75Z"/></clipPath>
<path d="M480 317L560 340L636 361" fill="none" stroke="#9fa1ab" stroke-width="7" opacity="0.75" filter="url(#blur2)" clip-path="url(#cLP)"/>
<path d="M640.0 355.5L632.5 361.2L622.5 360.6C620.3 361.9 617.7 362.6 616.0 364.5C614.6 366.1 614.0 368.4 613.8 370.6C613.6 372.1 614.2 373.7 615.0 375.0C615.5 375.9 616.7 376.3 617.5 377.0L625.0 372.0Z" fill="#c4c6cf" stroke="#c4c6cf" stroke-width="0.5" stroke-linejoin="round" />
<path d="M622.5 360.6C620.3 361.9 617.7 362.6 616.0 364.5C614.6 366.1 614.0 368.4 613.8 370.6C613.6 372.1 614.2 373.7 615.0 375.0C615.5 375.9 616.7 376.3 617.5 377.0L618.3 362.5Z" fill="#b5b7c2" stroke="#b5b7c2" stroke-width="0.5" stroke-linejoin="round" />
<clipPath id="h526"><ellipse cx="526.7" cy="374.25" rx="22.3" ry="12"/></clipPath>
<ellipse cx="526.7" cy="374.25" rx="22.3" ry="12" fill="#adaeb2"/>
<g clip-path="url(#h526)">
<ellipse cx="526.2" cy="376.4" rx="21.6" ry="11.4" fill="#8b8c91"/>
<ellipse cx="526.2" cy="377.8" rx="21.6" ry="11.4" fill="#cfd0d3"/>
<ellipse cx="526.2" cy="379.4" rx="21.6" ry="11.4" fill="#8b8c91"/>
<ellipse cx="526.2" cy="380.8" rx="21.6" ry="11.4" fill="#cfd0d3"/>
<ellipse cx="526.2" cy="382.4" rx="21.6" ry="11.4" fill="#8b8c91"/>
<ellipse cx="526.2" cy="383.8" rx="21.6" ry="11.4" fill="#cfd0d3"/>
<ellipse cx="525.7" cy="387.6" rx="17.8" ry="9.0" fill="#f2f2f6"/>
</g>
<ellipse cx="526.7" cy="374.25" rx="22.3" ry="12" fill="none" stroke="#6e6f75" stroke-width="0.5"/>
<path d="M363.8 445.5L380.0 430.0L505.0 463.8L527.5 473.8L490.0 508.0L365.0 472.5Z" fill="url(#gBlkF)" stroke="url(#gBlkF)" stroke-width="0.5" stroke-linejoin="round" />
<path d="M363.8 445.5L381.0 429.0L510.0 462.0L490.0 482.5Z" fill="#e4e6f3" stroke="#e4e6f3" stroke-width="0.5" stroke-linejoin="round" />
<path d="M490.0 482.5L504.0 464.5L527.5 473.8L490.0 508.0Z" fill="#c8cbd7" stroke="#c8cbd7" stroke-width="0.5" stroke-linejoin="round" />
<clipPath id="cBT"><path d="M363.75 445.5L381 429L510 462L490 482.5Z"/></clipPath>
<path d="M372 426L440 444L512 463" fill="none" stroke="#9c9da5" stroke-width="7" opacity="0.8" filter="url(#blur2)" clip-path="url(#cBT)"/>
<path d="M363.8 445.5L490.0 482.5L490.0 508.0" fill="none" stroke="#9d9ea5" stroke-width="0.4" />
<path d="M621.0 427.0L733.8 456.0L746.8 459.4L764.2 457.5L766.8 457.5L813.0 472.5L815.0 497.2L608.8 439.8Z" fill="url(#gBar)" stroke="url(#gBar)" stroke-width="0.5" stroke-linejoin="round" />
<path d="M813.0 472.5C818.0 472.3 823.0 472.6 828.0 471.9C832.3 471.3 836.5 470.3 840.5 468.8C843.2 467.7 845.7 466.2 848.0 464.4C850.0 462.8 851.3 460.6 853.0 458.8L854.0 481.0C852.3 483.7 851.3 486.9 849.0 489.0C846.5 491.3 843.2 492.8 840.0 494.0C836.1 495.5 832.1 496.5 828.0 497.0C823.7 497.6 819.3 497.2 815.0 497.2Z" fill="#d3d4da" stroke="#d3d4da" stroke-width="0.5" stroke-linejoin="round" />
<path d="M766.8 457.5L798.0 432.5L840.5 444.4C843.0 445.6 845.8 446.3 848.0 448.0C849.9 449.5 851.4 451.6 852.4 453.8C853.1 455.3 853.6 457.2 853.0 458.8C852.0 461.1 850.0 462.8 848.0 464.4C845.7 466.2 843.2 467.7 840.5 468.8C836.5 470.3 832.3 471.3 828.0 471.9C823.0 472.6 818.0 472.3 813.0 472.5Z" fill="#e5e7f4" stroke="#e5e7f4" stroke-width="0.5" stroke-linejoin="round" />
<path d="M766.8 457.5L783.0 445.0L808.0 452.0L812.0 462.0L806.0 470.0Z" fill="#d6d9e4" stroke="#d6d9e4" stroke-width="0.5" stroke-linejoin="round" />
<ellipse cx="825.5" cy="458.5" rx="17.4" ry="9.6" fill="url(#gBhole)" stroke="#9c9da4" stroke-width="0.5"/>
<path d="M809.5 462A17.4 9.6 0 0 0 842.6 459A19 11 0 0 1 809.5 462Z" fill="#e4e5ec"/>
<path d="M813.0 472.5L815.0 497.0" fill="none" stroke="#a2a3a9" stroke-width="0.4" />
<path d="M848.0 464.4L849.5 489.0" fill="none" stroke="#a9aab0" stroke-width="0.4" />
<path d="M766.8 457.5L813.0 472.5C818.0 472.3 823.0 472.6 828.0 471.9C832.3 471.3 836.5 470.3 840.5 468.8C843.2 467.7 845.7 466.2 848.0 464.4C850.0 462.8 851.3 460.6 853.0 458.8" fill="none" stroke="#a2a3ab" stroke-width="0.4" />
<path d="M652.0 340.5L705.0 297.5C706.0 296.5 707.0 295.6 708.0 294.6C709.5 293.1 710.6 291.1 712.5 290.2C715.1 289.0 718.1 288.3 721.0 288.4C724.6 288.5 728.0 289.9 731.5 290.6L850.0 324.8L853.8 350.0L738.8 319.4C735.6 319.7 732.3 319.0 729.4 320.2C725.8 321.7 722.5 324.3 720.0 327.2C711.0 337.9 703.3 349.6 695.0 360.8L648.0 350.7L632.5 361.2L622.5 358.8L560.0 341.5Z" fill="#8a8a8b" stroke="#8a8a8b" stroke-width="0.5" stroke-linejoin="round" />
<path d="M652.0 340.5L666.9 340.5C668.9 338.7 671.2 337.0 673.0 335.0C683.9 322.7 694.3 310.0 705.0 297.5L702.8 296.0Z" fill="#afb2bc" stroke="#afb2bc" stroke-width="0.5" stroke-linejoin="round" />
<path d="M850.0 324.8C854.2 325.2 858.3 326.1 862.5 326.0C867.5 325.9 872.6 325.1 877.5 324.0C882.6 322.8 887.7 321.2 892.5 319.0C896.5 317.2 900.4 315.1 903.8 312.2C907.1 309.4 910.4 306.1 912.5 302.2C914.0 299.5 913.8 296.0 914.4 292.9L917.0 319.8C915.0 323.2 913.8 327.2 911.0 330.0C905.7 335.3 899.6 339.9 893.0 343.5C886.4 347.1 879.4 350.3 872.0 351.5C866.0 352.5 859.8 350.5 853.8 350.0Z" fill="url(#gEndF)" stroke="url(#gEndF)" stroke-width="0.5" stroke-linejoin="round" />
<path d="M850.3 325.0L853.6 350.0" fill="none" stroke="#6f7078" stroke-width="0.4" />
<path d="M895.0 318.0L896.0 342.0" fill="none" stroke="#6f7078" stroke-width="0.4" />
<path d="M910.6 305.0L912.0 329.0" fill="none" stroke="#6f7078" stroke-width="0.4" />
<path d="M695.0 360.8L720.0 327.2C723.1 324.9 725.8 321.7 729.4 320.2C732.3 319.0 735.6 319.7 738.8 319.4L724.7 331.0L699.7 357.7Z" fill="#757679" stroke="#757679" stroke-width="0.5" stroke-linejoin="round" />
<path d="M344.6 277.5C344.9 275.9 344.7 274.2 345.4 272.8C346.3 271.0 347.8 269.4 349.3 268.0C360.3 257.9 371.8 248.3 383.0 238.4C387.1 236.1 391.0 233.1 395.4 231.4C399.4 229.9 403.7 229.3 408.0 229.0C412.1 228.7 416.4 228.5 420.4 229.4C423.8 230.1 426.9 231.9 429.8 233.8C432.7 235.7 435.2 238.2 437.6 240.8C440.5 244.0 443.0 247.5 445.4 251.0C448.2 255.0 450.5 259.3 453.2 263.4C455.7 267.1 458.1 271.0 461.0 274.4C463.9 277.8 466.8 281.2 470.4 283.8C474.2 286.5 478.7 288.1 482.9 290.0C487.2 292.0 491.6 293.7 496.0 295.5L652.0 340.5L632.5 361.2L622.5 358.8L480.0 319.5C475.3 318.0 470.5 317.0 466.0 315.0C462.4 313.4 459.0 311.5 456.0 309.0C453.0 306.5 450.8 303.2 448.5 300.0C446.2 296.8 444.3 293.4 442.2 290.0C440.1 286.4 438.2 282.6 436.0 279.0C434.0 275.6 432.1 272.1 429.8 269.0C427.9 266.7 425.8 264.5 423.5 262.7C421.1 260.8 418.6 259.0 415.7 258.0C412.7 256.9 409.5 256.4 406.3 256.4C403.2 256.4 400.0 257.0 397.0 258.0C393.1 259.3 389.7 261.6 386.0 263.4L357.0 291.6C354.9 290.5 352.7 289.8 350.8 288.4C349.0 287.1 347.1 285.7 346.0 283.8C344.9 281.9 345.1 279.6 344.6 277.5Z" fill="url(#gSlot)" stroke="url(#gSlot)" stroke-width="0.5" stroke-linejoin="round" />
<path d="M349.3 268.0L350.8 288.4" fill="none" stroke="#6a6b72" stroke-width="0.4" />
<path d="M383.7 239.0L385.2 264.0" fill="none" stroke="#6a6b72" stroke-width="0.4" />
<path d="M428.2 233.0L430.0 269.0" fill="none" stroke="#6a6b72" stroke-width="0.4" />
<path d="M713.0 291.2C728.3 276.2 744.1 261.7 759.7 247.0C761.1 246.1 762.4 244.7 764.0 244.2C765.9 243.6 768.0 243.5 770.0 243.6C772.5 243.8 775.0 244.5 777.5 245.0L900.0 279.8C903.3 281.8 907.1 283.3 910.0 286.0C912.0 287.8 914.0 290.2 914.4 292.9C914.9 296.0 914.0 299.5 912.5 302.2C910.4 306.1 907.1 309.4 903.8 312.2C900.4 315.1 896.5 317.2 892.5 319.0C887.7 321.2 882.6 322.8 877.5 324.0C872.6 325.1 867.5 325.9 862.5 326.0C858.3 326.1 854.2 325.2 850.0 324.8L731.5 291.3C728.3 290.5 725.2 289.3 722.0 288.9C720.2 288.7 718.3 288.8 716.5 289.3C715.2 289.6 712.1 292.1 713.0 291.2Z" fill="#a6a9b6" stroke="#a6a9b6" stroke-width="0.5" stroke-linejoin="round" />
<path d="M729.6 290.0L778.5 245.0" fill="none" stroke="#7d7e86" stroke-width="0.4" />
<path d="M713.0 291.2C714.2 290.6 715.2 289.6 716.5 289.3C718.3 288.8 720.2 288.7 722.0 288.9C725.2 289.3 728.3 290.5 731.5 291.3L850.0 324.8C854.2 325.2 858.3 326.1 862.5 326.0C867.5 325.9 872.6 325.1 877.5 324.0C882.6 322.8 887.7 321.2 892.5 319.0C896.5 317.2 900.4 315.1 903.8 312.2C907.1 309.4 910.4 306.1 912.5 302.2C914.0 299.5 913.8 296.0 914.4 292.9" fill="none" stroke="#7d7e86" stroke-width="0.4" />
<clipPath id="h863"><ellipse cx="863.4" cy="299.25" rx="19.4" ry="10.75"/></clipPath>
<ellipse cx="863.4" cy="299.25" rx="19.4" ry="10.75" fill="#adaeb2"/>
<g clip-path="url(#h863)">
<ellipse cx="862.9" cy="301.4" rx="18.8" ry="10.2" fill="#8b8c91"/>
<ellipse cx="862.9" cy="302.8" rx="18.8" ry="10.2" fill="#cfd0d3"/>
<ellipse cx="862.9" cy="304.4" rx="18.8" ry="10.2" fill="#8b8c91"/>
<ellipse cx="862.9" cy="305.8" rx="18.8" ry="10.2" fill="#cfd0d3"/>
<ellipse cx="862.9" cy="307.4" rx="18.8" ry="10.2" fill="#8b8c91"/>
<ellipse cx="862.9" cy="308.8" rx="18.8" ry="10.2" fill="#cfd0d3"/>
<ellipse cx="862.9" cy="310.4" rx="18.8" ry="10.2" fill="#8b8c91"/>
<ellipse cx="862.9" cy="311.8" rx="18.8" ry="10.2" fill="#cfd0d3"/>
<ellipse cx="862.9" cy="312.0" rx="18.8" ry="10.2" fill="#8b8c91"/>
<ellipse cx="862.9" cy="313.2" rx="18.8" ry="10.2" fill="#adaeb2"/>
</g>
<ellipse cx="863.4" cy="299.25" rx="19.4" ry="10.75" fill="none" stroke="#6e6f75" stroke-width="0.5"/>
<path d="M190.5 303.8L361.0 152.2L468.8 183.8C473.3 186.7 478.3 189.1 482.5 192.5C487.1 196.2 491.6 200.2 495.0 205.0C500.0 212.0 502.9 220.3 507.5 227.5C510.4 232.0 513.4 236.6 517.5 240.0C521.1 243.0 525.8 244.3 530.0 246.5L702.8 296.0L652.0 340.5L496.0 295.5C491.6 293.7 487.2 292.0 482.9 290.0C478.7 288.1 474.2 286.5 470.4 283.8C466.8 281.2 463.9 277.8 461.0 274.4C458.1 271.0 455.7 267.1 453.2 263.4C450.5 259.3 448.2 255.0 445.4 251.0C443.0 247.5 440.5 244.0 437.6 240.8C435.2 238.2 432.7 235.7 429.8 233.8C426.9 231.9 423.8 230.1 420.4 229.4C416.4 228.5 412.1 228.7 408.0 229.0C403.7 229.3 399.4 229.9 395.4 231.4C391.0 233.1 387.1 236.1 383.0 238.4C371.8 248.3 360.3 257.9 349.3 268.0C347.8 269.4 346.3 271.0 345.4 272.8C344.7 274.2 344.9 275.9 344.6 277.5C345.1 279.6 344.9 281.9 346.0 283.8C347.1 285.7 349.0 287.1 350.8 288.4C352.7 289.8 355.0 290.4 357.0 291.6C360.0 293.5 363.1 295.4 365.7 297.8C368.4 300.2 370.9 303.0 373.0 306.0C375.6 309.6 378.0 313.5 380.0 317.5C382.9 323.3 384.1 330.0 387.5 335.5C390.2 339.9 393.8 344.0 398.0 347.0C402.3 350.1 407.7 351.3 412.5 353.5L586.4 403.0L533.8 447.3L365.0 397.5C360.0 394.2 354.6 391.3 350.0 387.5C344.6 383.0 339.4 378.0 335.0 372.5C329.4 365.5 325.4 357.3 320.0 350.0C317.3 346.4 314.5 342.9 311.0 340.0C308.5 338.0 305.3 337.0 302.5 335.5Z" fill="#a6a9b6" stroke="#a6a9b6" stroke-width="0.5" stroke-linejoin="round" />
<path d="M302.5 335.5L357.0 291.6C359.9 293.7 363.1 295.4 365.7 297.8C368.4 300.2 370.9 303.0 373.0 306.0C375.6 309.6 378.0 313.5 380.0 317.5C382.9 323.3 384.1 330.0 387.5 335.5C390.2 339.9 393.8 344.0 398.0 347.0C402.3 350.1 407.7 351.3 412.5 353.5L365.0 397.5C360.0 394.2 354.6 391.3 350.0 387.5C344.6 383.0 339.4 378.0 335.0 372.5C329.4 365.5 325.4 357.3 320.0 350.0C317.3 346.4 314.5 342.9 311.0 340.0C308.5 338.0 305.3 337.0 302.5 335.5Z" fill="url(#gBendN)" stroke="url(#gBendN)" stroke-width="0.5" stroke-linejoin="round" />
<path d="M302.5 335.5L357.0 291.6" fill="none" stroke="#6f7078" stroke-width="0.5" />
<path d="M327.5 355.5L375.0 311.0" fill="none" stroke="#6f7078" stroke-width="0.5" />
<path d="M340.0 377.5L387.5 335.5" fill="none" stroke="#6f7078" stroke-width="0.5" />
<path d="M365.0 397.5L412.5 353.5" fill="none" stroke="#6f7078" stroke-width="0.5" />
<path d="M468.8 183.8C473.3 186.7 478.3 189.1 482.5 192.5C487.1 196.2 491.6 200.2 495.0 205.0C500.0 212.0 502.9 220.3 507.5 227.5C510.4 232.0 513.4 236.6 517.5 240.0C521.1 243.0 525.8 244.3 530.0 246.5L482.9 290.0C478.7 287.9 474.2 286.5 470.4 283.8C466.8 281.2 463.9 277.8 461.0 274.4C458.1 271.0 455.7 267.1 453.2 263.4C450.5 259.3 448.2 255.0 445.4 251.0C443.0 247.5 440.5 244.0 437.6 240.8C435.2 238.2 432.7 235.7 429.8 233.8C426.9 231.9 423.5 230.8 420.4 229.4Z" fill="url(#gBendF)" stroke="url(#gBendF)" stroke-width="0.5" stroke-linejoin="round" />
<path d="M468.8 183.8L420.4 229.4" fill="none" stroke="#6f7078" stroke-width="0.5" />
<path d="M493.8 203.8L443.8 248.6" fill="none" stroke="#6f7078" stroke-width="0.5" />
<path d="M507.5 227.5L457.9 270.5" fill="none" stroke="#6f7078" stroke-width="0.5" />
<path d="M530.0 246.5L482.9 290.0" fill="none" stroke="#6f7078" stroke-width="0.5" />
<path d="M696.6 299.0L652.8 338.0" fill="none" stroke="#7d7e86" stroke-width="0.4" />
<path d="M580.8 402.0L530.0 446.3" fill="none" stroke="#7d7e86" stroke-width="0.4" />
<path d="M190.5 303.8L361.0 152.2L468.8 183.8C473.3 186.7 478.3 189.1 482.5 192.5C487.1 196.2 491.6 200.2 495.0 205.0C500.0 212.0 502.9 220.3 507.5 227.5C510.4 232.0 513.4 236.6 517.5 240.0C521.1 243.0 525.8 244.3 530.0 246.5L702.8 296.0" fill="none" stroke="#8a8c96" stroke-width="0.4" />
<path d="M240.0 291.0L292.0 277.0C294.7 277.2 297.4 276.7 300.0 277.5C301.9 278.1 304.1 279.2 305.0 281.0C305.7 282.5 305.2 284.8 304.0 286.0C301.9 288.1 298.7 288.7 296.0 290.0L250.0 306.0L238.0 308.0Z" fill="#9395a2" stroke="#9395a2" stroke-width="0.5" stroke-linejoin="round" filter="url(#blur1)"/>
<path d="M382.7 159.5L422.5 171.9L400.0 176.0L388.0 176.9L386.0 166.0Z" fill="#9698a5" stroke="#9698a5" stroke-width="0.5" stroke-linejoin="round" filter="url(#blur1)"/>
<path d="M331.0 179.0L354.5 160.0L355.3 171.4L349.8 177.0Z" fill="#9fa1ad" stroke="#9fa1ad" stroke-width="0.5" stroke-linejoin="round" filter="url(#blur1)"/>
<ellipse cx="370.3" cy="176.3" rx="20.1" ry="11.2" fill="#a3a6b3" stroke="#72737b" stroke-width="0.5"/>
<ellipse cx="370.3" cy="175.70000000000002" rx="17.1" ry="9.2" fill="#b0b2bd"/>
<ellipse cx="369.7" cy="168.7" rx="15.2" ry="7.8" fill="#85868e"/>
<path d="M354.7 152.6L356.0 168.2A13.7 7.5 0 0 0 383.4 168.2L382.1 152.6Z" fill="url(#gShank)"/>
<path d="M350.5 102.5L354.7 152.6A13.7 7.5 0 0 0 382.1 152.6L377.9 102.5Z" fill="url(#gThread)"/>
<path d="M350.7 104.8A13.7 7.5 0 0 0 378.1 104.8" fill="none" stroke="#66676d" stroke-width="0.5" opacity="0.8"/>
<path d="M350.9 107.1A13.7 7.5 0 0 0 378.3 107.1" fill="none" stroke="#66676d" stroke-width="0.5" opacity="0.8"/>
<path d="M351.1 109.3A13.7 7.5 0 0 0 378.5 109.3" fill="none" stroke="#66676d" stroke-width="0.5" opacity="0.8"/>
<path d="M351.3 111.6A13.7 7.5 0 0 0 378.7 111.6" fill="none" stroke="#66676d" stroke-width="0.5" opacity="0.8"/>
<path d="M351.5 113.9A13.7 7.5 0 0 0 378.9 113.9" fill="none" stroke="#66676d" stroke-width="0.5" opacity="0.8"/>
<path d="M351.6 116.2A13.7 7.5 0 0 0 379.0 116.2" fill="none" stroke="#66676d" stroke-width="0.5" opacity="0.8"/>
<path d="M351.8 118.4A13.7 7.5 0 0 0 379.2 118.4" fill="none" stroke="#66676d" stroke-width="0.5" opacity="0.8"/>
<path d="M352.0 120.7A13.7 7.5 0 0 0 379.4 120.7" fill="none" stroke="#66676d" stroke-width="0.5" opacity="0.8"/>
<path d="M352.2 123.0A13.7 7.5 0 0 0 379.6 123.0" fill="none" stroke="#66676d" stroke-width="0.5" opacity="0.8"/>
<path d="M352.4 125.3A13.7 7.5 0 0 0 379.8 125.3" fill="none" stroke="#66676d" stroke-width="0.5" opacity="0.8"/>
<path d="M352.6 127.5A13.7 7.5 0 0 0 380.0 127.5" fill="none" stroke="#66676d" stroke-width="0.5" opacity="0.8"/>
<path d="M352.8 129.8A13.7 7.5 0 0 0 380.2 129.8" fill="none" stroke="#66676d" stroke-width="0.5" opacity="0.8"/>
<path d="M353.0 132.1A13.7 7.5 0 0 0 380.4 132.1" fill="none" stroke="#66676d" stroke-width="0.5" opacity="0.8"/>
<path d="M353.2 134.4A13.7 7.5 0 0 0 380.6 134.4" fill="none" stroke="#66676d" stroke-width="0.5" opacity="0.8"/>
<path d="M353.4 136.7A13.7 7.5 0 0 0 380.8 136.7" fill="none" stroke="#66676d" stroke-width="0.5" opacity="0.8"/>
<path d="M353.6 138.9A13.7 7.5 0 0 0 381.0 138.9" fill="none" stroke="#66676d" stroke-width="0.5" opacity="0.8"/>
<path d="M353.7 141.2A13.7 7.5 0 0 0 381.1 141.2" fill="none" stroke="#66676d" stroke-width="0.5" opacity="0.8"/>
<path d="M353.9 143.5A13.7 7.5 0 0 0 381.3 143.5" fill="none" stroke="#66676d" stroke-width="0.5" opacity="0.8"/>
<path d="M354.1 145.8A13.7 7.5 0 0 0 381.5 145.8" fill="none" stroke="#66676d" stroke-width="0.5" opacity="0.8"/>
<path d="M354.3 148.0A13.7 7.5 0 0 0 381.7 148.0" fill="none" stroke="#66676d" stroke-width="0.5" opacity="0.8"/>
<path d="M354.5 150.3A13.7 7.5 0 0 0 381.9 150.3" fill="none" stroke="#66676d" stroke-width="0.5" opacity="0.8"/>
<path d="M354.7 152.6A13.7 7.5 0 0 0 382.1 152.6" fill="none" stroke="#66676d" stroke-width="0.5" opacity="0.8"/>
<ellipse cx="364.2" cy="102.5" rx="13.7" ry="7.5" fill="#a4a7b3" stroke="#6f7078" stroke-width="0.5"/>
<ellipse cx="235.5" cy="299" rx="19.6" ry="9.8" fill="#a3a6b3" stroke="#72737b" stroke-width="0.5"/>
<ellipse cx="235.5" cy="298.4" rx="16.6" ry="7.800000000000001" fill="#b0b2bd"/>
<ellipse cx="235.7" cy="290.5" rx="14.9" ry="7.7" fill="#85868e"/>
<path d="M220.8 273.6L222.3 290A13.4 7.4 0 0 0 249.1 290L247.6 273.6Z" fill="url(#gShank)"/>
<path d="M216.1 222.5L220.8 273.6A13.4 7.4 0 0 0 247.6 273.6L242.9 222.5Z" fill="url(#gThread)"/>
<path d="M216.3 224.8A13.4 7.4 0 0 0 243.1 224.8" fill="none" stroke="#66676d" stroke-width="0.5" opacity="0.8"/>
<path d="M216.5 227.1A13.4 7.4 0 0 0 243.3 227.1" fill="none" stroke="#66676d" stroke-width="0.5" opacity="0.8"/>
<path d="M216.7 229.5A13.4 7.4 0 0 0 243.5 229.5" fill="none" stroke="#66676d" stroke-width="0.5" opacity="0.8"/>
<path d="M217.0 231.8A13.4 7.4 0 0 0 243.8 231.8" fill="none" stroke="#66676d" stroke-width="0.5" opacity="0.8"/>
<path d="M217.2 234.1A13.4 7.4 0 0 0 244.0 234.1" fill="none" stroke="#66676d" stroke-width="0.5" opacity="0.8"/>
<path d="M217.4 236.4A13.4 7.4 0 0 0 244.2 236.4" fill="none" stroke="#66676d" stroke-width="0.5" opacity="0.8"/>
<path d="M217.6 238.8A13.4 7.4 0 0 0 244.4 238.8" fill="none" stroke="#66676d" stroke-width="0.5" opacity="0.8"/>
<path d="M217.8 241.1A13.4 7.4 0 0 0 244.6 241.1" fill="none" stroke="#66676d" stroke-width="0.5" opacity="0.8"/>
<path d="M218.0 243.4A13.4 7.4 0 0 0 244.8 243.4" fill="none" stroke="#66676d" stroke-width="0.5" opacity="0.8"/>
<path d="M218.2 245.7A13.4 7.4 0 0 0 245.0 245.7" fill="none" stroke="#66676d" stroke-width="0.5" opacity="0.8"/>
<path d="M218.4 248.1A13.4 7.4 0 0 0 245.2 248.1" fill="none" stroke="#66676d" stroke-width="0.5" opacity="0.8"/>
<path d="M218.7 250.4A13.4 7.4 0 0 0 245.5 250.4" fill="none" stroke="#66676d" stroke-width="0.5" opacity="0.8"/>
<path d="M218.9 252.7A13.4 7.4 0 0 0 245.7 252.7" fill="none" stroke="#66676d" stroke-width="0.5" opacity="0.8"/>
<path d="M219.1 255.0A13.4 7.4 0 0 0 245.9 255.0" fill="none" stroke="#66676d" stroke-width="0.5" opacity="0.8"/>
<path d="M219.3 257.3A13.4 7.4 0 0 0 246.1 257.3" fill="none" stroke="#66676d" stroke-width="0.5" opacity="0.8"/>
<path d="M219.5 259.7A13.4 7.4 0 0 0 246.3 259.7" fill="none" stroke="#66676d" stroke-width="0.5" opacity="0.8"/>
<path d="M219.7 262.0A13.4 7.4 0 0 0 246.5 262.0" fill="none" stroke="#66676d" stroke-width="0.5" opacity="0.8"/>
<path d="M219.9 264.3A13.4 7.4 0 0 0 246.7 264.3" fill="none" stroke="#66676d" stroke-width="0.5" opacity="0.8"/>
<path d="M220.2 266.6A13.4 7.4 0 0 0 247.0 266.6" fill="none" stroke="#66676d" stroke-width="0.5" opacity="0.8"/>
<path d="M220.4 269.0A13.4 7.4 0 0 0 247.2 269.0" fill="none" stroke="#66676d" stroke-width="0.5" opacity="0.8"/>
<path d="M220.6 271.3A13.4 7.4 0 0 0 247.4 271.3" fill="none" stroke="#66676d" stroke-width="0.5" opacity="0.8"/>
<path d="M220.8 273.6A13.4 7.4 0 0 0 247.6 273.6" fill="none" stroke="#66676d" stroke-width="0.5" opacity="0.8"/>
<ellipse cx="229.5" cy="222.5" rx="13.4" ry="7.4" fill="#a4a7b3" stroke="#6f7078" stroke-width="0.5"/>
<ellipse cx="584.8" cy="290.70000000000005" rx="30.9" ry="11.5" fill="#8c8e9a" opacity="0.75" filter="url(#blur2)"/>
<path d="M565.9 275.6V291.20000000000005A18.9 10 0 0 0 603.6999999999999 291.20000000000005V275.6Z" fill="url(#gPin)" stroke="#77787d" stroke-width="0.4"/>
<ellipse cx="584.8" cy="275.6" rx="18.9" ry="10" fill="#e3e5f2" stroke="#77787d" stroke-width="0.5"/>
<ellipse cx="464.8" cy="399.0" rx="30.9" ry="11.75" fill="#8c8e9a" opacity="0.75" filter="url(#blur2)"/>
<path d="M445.90000000000003 383.75V399.5A18.9 10.25 0 0 0 483.7 399.5V383.75Z" fill="url(#gPin)" stroke="#77787d" stroke-width="0.4"/>
<ellipse cx="464.8" cy="383.75" rx="18.9" ry="10.25" fill="#e3e5f2" stroke="#77787d" stroke-width="0.5"/>
<path d="M586.4 403.0L587.5 405.0L554.5 442.6C552.0 444.2 549.9 446.6 547.0 447.3C542.7 448.3 538.2 447.3 533.8 447.3Z" fill="#afb2bc" stroke="#afb2bc" stroke-width="0.5" stroke-linejoin="round" />
<path d="M190.5 303.8L302.5 335.5C305.3 337.0 308.5 338.0 311.0 340.0C314.5 342.9 317.3 346.4 320.0 350.0C325.4 357.3 329.4 365.5 335.0 372.5C339.4 378.0 344.6 383.0 350.0 387.5C354.6 391.3 360.0 394.2 365.0 397.5L533.8 447.3C538.2 447.3 542.7 448.3 547.0 447.3C549.9 446.6 552.5 444.7 554.5 442.6C566.0 430.6 576.5 417.5 587.5 405.0C590.0 402.3 591.9 398.9 595.0 396.9C597.1 395.5 599.9 395.4 602.5 395.2C605.4 395.1 608.3 395.9 611.2 396.2L692.0 419.5L732.5 432.5L733.8 456.0L620.2 425.7C617.1 426.0 613.7 425.4 610.8 426.6C607.2 428.0 604.0 430.3 601.4 433.2C590.1 445.8 580.1 459.5 569.5 472.7C566.3 474.9 563.7 478.3 560.0 479.2C555.8 480.2 551.2 479.5 547.0 478.3C489.4 462.1 432.3 444.1 375.0 427.0C368.3 425.0 361.6 423.3 355.0 421.0C349.9 419.3 344.4 418.1 340.0 415.0C334.2 410.9 329.4 405.5 325.0 400.0C319.4 393.0 315.3 384.8 310.0 377.5C306.3 372.4 302.7 367.2 298.0 363.0C295.0 360.4 291.0 359.3 287.5 357.5L192.0 328.8Z" fill="url(#gFront)" stroke="url(#gFront)" stroke-width="0.5" stroke-linejoin="round" />
<path d="M569.5 472.7L601.4 433.2C604.5 431.0 607.2 428.0 610.8 426.6C613.7 425.4 617.1 426.0 620.2 425.7L612.0 437.0L582.7 466.0Z" fill="#757679" stroke="#757679" stroke-width="0.5" stroke-linejoin="round" />
<path d="M190.5 303.8L192.0 328.8" fill="none" stroke="#7d7e86" stroke-width="0.4" />
<path d="M190.5 303.8L302.5 335.5C305.3 337.0 308.5 338.0 311.0 340.0C314.5 342.9 317.3 346.4 320.0 350.0C325.4 357.3 329.4 365.5 335.0 372.5C339.4 378.0 344.6 383.0 350.0 387.5C354.6 391.3 360.0 394.2 365.0 397.5L533.8 447.3C538.2 447.3 542.7 448.3 547.0 447.3C549.9 446.6 552.5 444.7 554.5 442.6C566.0 430.6 576.5 417.5 587.5 405.0C590.0 402.3 591.9 398.9 595.0 396.9C597.1 395.5 599.9 395.4 602.5 395.2C605.4 395.1 608.3 395.9 611.2 396.2L692.0 419.5L732.5 432.5" fill="none" stroke="#808189" stroke-width="0.4" />
<path d="M596.0 396.0L640.0 355.0C641.5 353.9 642.8 352.4 644.5 351.6C646.2 350.8 648.1 350.6 650.0 350.6C653.4 350.7 656.7 351.5 660.0 351.9L780.0 386.0C784.2 388.2 788.9 389.5 792.5 392.5C794.8 394.4 797.0 397.1 797.0 400.0C797.0 403.7 794.9 407.2 792.5 410.0C789.0 414.1 784.4 417.0 780.0 420.0C775.2 423.3 770.3 426.5 765.0 428.8C760.2 430.7 755.1 431.9 750.0 432.5C744.2 433.2 738.3 432.5 732.5 432.5L611.2 396.2L602.5 395.2Z" fill="#a6a9b6" stroke="#a6a9b6" stroke-width="0.5" stroke-linejoin="round" />
<path d="M596.0 396.0L640.0 355.0C641.5 353.9 642.8 352.4 644.5 351.6C646.2 350.8 648.1 350.6 650.0 350.6C653.4 350.7 656.7 351.5 660.0 351.9L611.2 396.2L602.5 395.2Z" fill="url(#gBand)" stroke="url(#gBand)" stroke-width="0.5" stroke-linejoin="round" />
<path d="M660.0 351.9L611.2 396.2" fill="none" stroke="#7d7e86" stroke-width="0.4" />
<path d="M732.5 432.5C738.3 432.5 744.2 433.2 750.0 432.5C755.1 431.9 760.2 430.7 765.0 428.8C770.3 426.5 775.2 423.3 780.0 420.0C784.4 417.0 789.0 414.1 792.5 410.0C794.9 407.2 795.5 403.3 797.0 400.0L799.2 422.5C798.8 425.4 799.3 428.6 798.0 431.2C796.3 434.7 793.3 437.4 790.5 440.0C786.6 443.6 782.4 447.0 778.0 450.0C773.7 452.9 769.2 456.0 764.2 457.5C758.6 459.2 752.6 459.7 746.8 459.4C742.3 459.2 738.1 457.1 733.8 456.0Z" fill="url(#gEndN)" stroke="url(#gEndN)" stroke-width="0.5" stroke-linejoin="round" />
<path d="M732.4 432.5L733.8 456.0" fill="none" stroke="#6f7078" stroke-width="0.4" />
<path d="M776.0 422.5L777.5 450.0" fill="none" stroke="#6f7078" stroke-width="0.4" />
<path d="M793.0 409.0L794.5 436.0" fill="none" stroke="#6f7078" stroke-width="0.4" />
<path d="M611.2 396.2L732.5 432.5C738.3 432.5 744.2 433.2 750.0 432.5C755.1 431.9 760.2 430.7 765.0 428.8C770.3 426.5 775.2 423.3 780.0 420.0C784.4 417.0 789.0 414.1 792.5 410.0C794.9 407.2 795.5 403.3 797.0 400.0" fill="none" stroke="#7d7e86" stroke-width="0.4" />
<clipPath id="h743"><ellipse cx="743.75" cy="407.5" rx="19" ry="10.5"/></clipPath>
<ellipse cx="743.75" cy="407.5" rx="19" ry="10.5" fill="#adaeb2"/>
<g clip-path="url(#h743)">
<ellipse cx="743.25" cy="409.7" rx="18.4" ry="10.0" fill="#8b8c91"/>
<ellipse cx="743.25" cy="411.0" rx="18.4" ry="10.0" fill="#cfd0d3"/>
<ellipse cx="743.25" cy="412.7" rx="18.4" ry="10.0" fill="#8b8c91"/>
<ellipse cx="743.25" cy="414.0" rx="18.4" ry="10.0" fill="#cfd0d3"/>
<ellipse cx="743.25" cy="415.7" rx="18.4" ry="10.0" fill="#8b8c91"/>
<ellipse cx="743.25" cy="417.0" rx="18.4" ry="10.0" fill="#cfd0d3"/>
<ellipse cx="743.25" cy="418.7" rx="18.4" ry="10.0" fill="#8b8c91"/>
<ellipse cx="743.25" cy="420.0" rx="18.4" ry="10.0" fill="#cfd0d3"/>
<ellipse cx="743.25" cy="420.3" rx="18.4" ry="10.0" fill="#8b8c91"/>
<ellipse cx="743.25" cy="421.5" rx="18.4" ry="10.0" fill="#adaeb2"/>
</g>
<ellipse cx="743.75" cy="407.5" rx="19" ry="10.5" fill="none" stroke="#6e6f75" stroke-width="0.5"/>
</g>
</svg>
</body>
</html>
